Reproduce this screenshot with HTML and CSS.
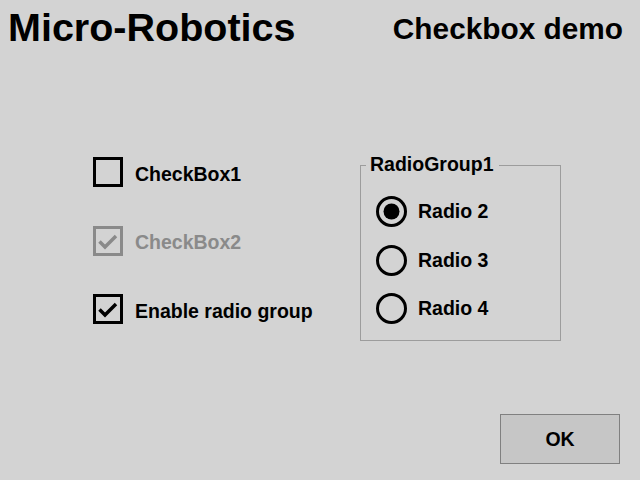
FILE: index.html
```html
<!DOCTYPE html>
<html>
    <head>
    <link rel="stylesheet" href="styles.css">
    </head>
    <body>
    <div class="header">
        <div class="title">Micro-Robotics</div>
        <div class="subtitle">Checkbox demo</div>
    </div>

    <div class="content">
        <div class="checks">
            <input type="checkbox" id="cb1">
            <label for="cb1" class="check">
                <span class="box"></span>
                <span class="text">CheckBox1</span>
            </label>
            <input type="checkbox" id="cb2" checked disabled>
            <label for="cb2" class="check disabled">
                <span class="box">
                    <svg width="24" height="24" viewBox="0 0 24 24"><polyline points="3.5,12.5 9,18 20,7" fill="none" stroke="currentColor" stroke-width="3.5"/></svg>
                </span>
                <span class="text">CheckBox2</span>
            </label>
            <input type="checkbox" id="cb3" checked>
            <label for="cb3" class="check">
                <span class="box">
                    <svg width="24" height="24" viewBox="0 0 24 24"><polyline points="3.5,12.5 9,18 20,7" fill="none" stroke="currentColor" stroke-width="3.5"/></svg>
                </span>
                <span class="text">Enable radio group</span>
            </label>
        </div>

        <fieldset class="group">
            <legend>RadioGroup1</legend>
            <div class="radios">
                <label class="radio">
                    <svg width="31" height="31" viewBox="0 0 31 31"><circle cx="15.5" cy="15.5" r="14" fill="none" stroke="#000" stroke-width="3"/><circle cx="15.5" cy="15.5" r="8" fill="#000"/></svg>
                    <span class="text">Radio 2</span>
                </label>
                <label class="radio">
                    <svg width="31" height="31" viewBox="0 0 31 31"><circle cx="15.5" cy="15.5" r="14" fill="none" stroke="#000" stroke-width="3"/></svg>
                    <span class="text">Radio 3</span>
                </label>
                <label class="radio">
                    <svg width="31" height="31" viewBox="0 0 31 31"><circle cx="15.5" cy="15.5" r="14" fill="none" stroke="#000" stroke-width="3"/></svg>
                    <span class="text">Radio 4</span>
                </label>
            </div>
        </fieldset>
    </div>

    <div class="footer">
        <button class="ok">OK</button>
    </div>
    </body>
</html>
```

FILE: styles.css
```css
html
{
    background-color: #d3d3d3;
}

body
{
    margin: 0;
    height: 480px;
    display: flex;
    flex-direction: column;
    font-family: "Liberation Sans", Arial, sans-serif;
    font-weight: bold;
    color: #000;
}

.header
{
    display: flex;
    justify-content: space-between;
    align-items: flex-start;
    padding: 5px 17px 0 8px;
}

.title
{
    font-size: 39.5px;
}

.subtitle
{
    font-size: 29.8px;
    margin-top: 7px;
}

.content
{
    display: flex;
    align-items: flex-start;
    padding: 103px 0 0 93px;
}

.checks
{
    width: 267px;
    margin-top: 4px;
    display: flex;
    flex-direction: column;
    gap: 38.5px;
}

input[type="checkbox"]
{
    display: none;
}

.check
{
    display: flex;
    align-items: center;
    gap: 12px;
    font-size: 19.5px;
}

.check .text
{
    padding-top: 4px;
}

.box
{
    width: 30px;
    height: 30px;
    box-sizing: border-box;
    border: 3px solid #000;
    display: flex;
}

.disabled
{
    color: #8a8a8a;
}

.disabled .box
{
    border-color: #8a8a8a;
}

.group
{
    margin: 0;
    width: 201px;
    box-sizing: border-box;
    border: 1px solid #9c9c9c;
    padding: 19px 0 16px 15px;
}

legend
{
    font-size: 19.5px;
    margin-left: -10px;
    padding: 0 5px 1px 4px;
}

.radios
{
    display: flex;
    flex-direction: column;
    gap: 17.5px;
}

.radio
{
    display: flex;
    align-items: center;
    gap: 11px;
    font-size: 19.5px;
}

.footer
{
    margin-top: auto;
    display: flex;
    justify-content: flex-end;
    padding: 0 20px 16px 0;
}

.ok
{
    width: 120px;
    height: 50px;
    background-color: #c6c6c6;
    border: 1px solid #808080;
    font-family: "Liberation Sans", Arial, sans-serif;
    font-weight: bold;
    font-size: 19.5px;
    color: #000;
    padding: 0;
}
```
